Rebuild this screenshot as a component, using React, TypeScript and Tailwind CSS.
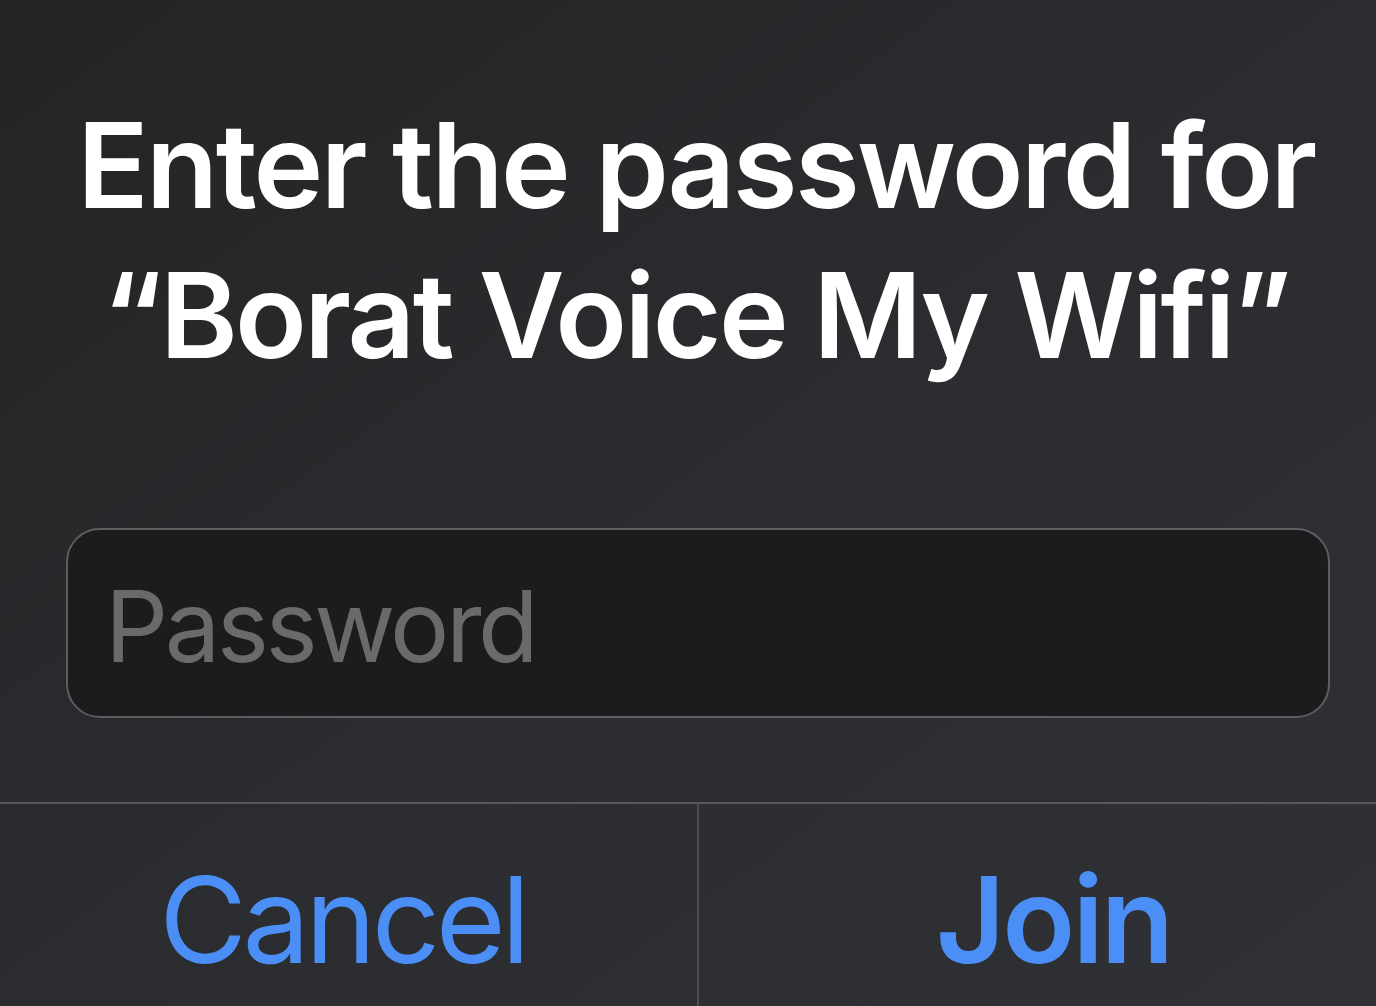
import React from "react";

export default function App() {
  return (
    <div
      className="w-full h-[1006px] overflow-hidden flex flex-col bg-gradient-to-br from-[#222425] via-[#2a2c2f] to-[#2f3136]"
      style={{ fontFamily: "Inter, 'Noto Sans', sans-serif" }}
    >
      <div className="pt-[90px] pl-[16px] text-center text-white font-semibold text-[118px] leading-[150px] tracking-[-2.6px]">
        <div>Enter the password for</div>
        <div>“Borat Voice My Wifi”</div>
      </div>
      <div className="mt-[138px] mx-[66px] w-[1264px] h-[190px] rounded-[34px] border-2 border-[#5e5e61] bg-[#1c1c1e] flex items-center pl-[37px]">
        <span className="text-[99px] leading-none text-[#6a6a6c] pt-[6px] tracking-[-3.5px]">Password</span>
      </div>
      <div className="mt-[84px] border-t-2 border-[#56585c] flex flex-1">
        <div className="w-[699px] border-r-2 border-[#4a4c50] flex justify-center pt-[41px]">
          <span className="text-[120px] leading-[150px] text-[#4b8ff6] pr-[12px] tracking-[-4.5px]">Cancel</span>
        </div>
        <div className="flex-1 flex justify-center pt-[41px]">
          <span className="text-[120px] leading-[150px] font-semibold text-[#4b8ff6] pl-[32px] tracking-[-3px]">Join</span>
        </div>
      </div>
    </div>
  );
}
